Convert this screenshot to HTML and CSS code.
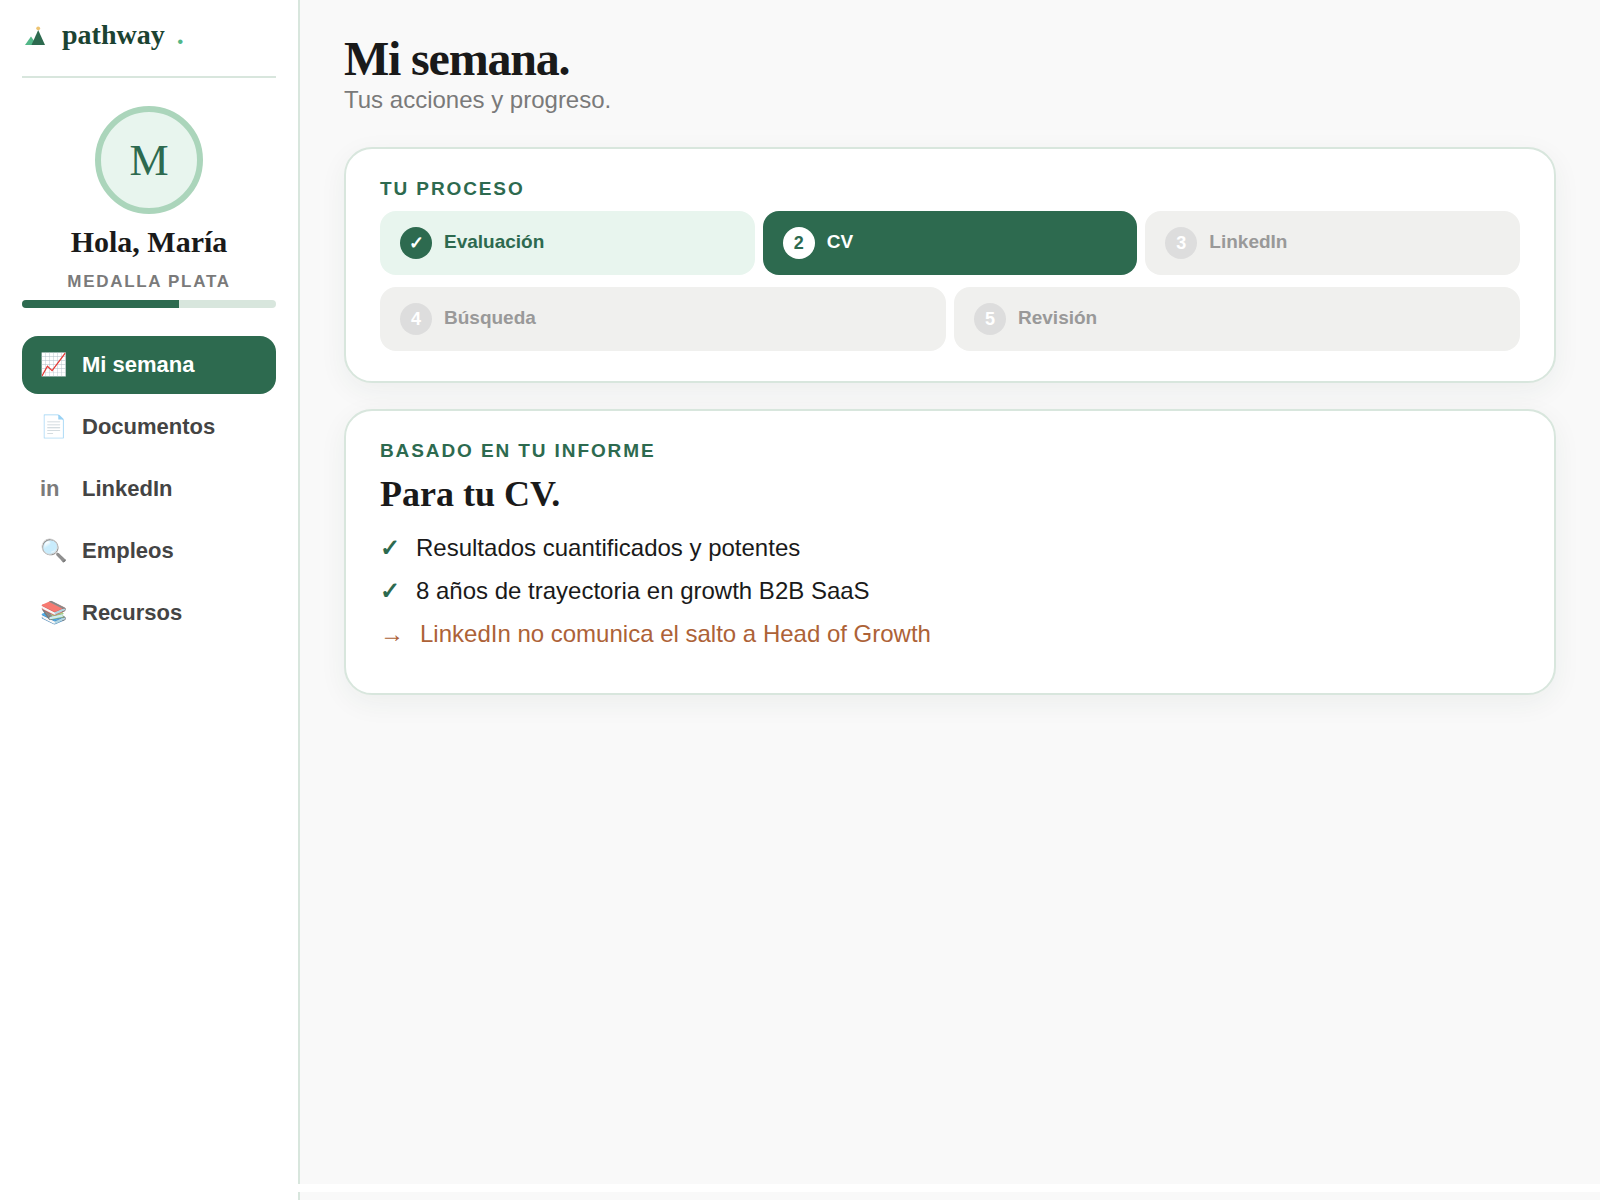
FILE: index.html
```html
<!DOCTYPE html>
<html lang="es">
<head>
    <meta charset="UTF-8">
    <meta name="viewport" content="width=device-width, initial-scale=1.0">
    <title>Pathway - Mi semana</title>
    <link rel="stylesheet" href="styles.css">
</head>
<body>

    <div class="layout">
        <!-- Sidebar -->
        <aside class="sidebar">
            <div class="brand">
                <svg class="brand-logo" viewBox="0 0 28 28" aria-hidden="true">
                    <path d="M3 24L9 15.5L15 24Z" fill="#52b788"/>
                    <path d="M9.500 24L16.200 9L23 24Z" fill="#2d6a4f"/>
                    <circle cx="16.200" cy="7.300" r="1.900" fill="#e9b44c" fill-opacity=".8"/>
                </svg>
                <span class="brand-name">pathway</span>
                <span class="brand-dot">.</span>
            </div>

            <div class="profile">
                <div class="avatar">M</div>
                <div class="profile-name">Hola, María</div>
                <div class="profile-level">MEDALLA PLATA</div>
                <div class="progress">
                    <div class="progress-fill" style="width: 62%"></div>
                </div>
            </div>

            <nav class="menu">
                <a href="#semana" class="menu-item active"><span class="menu-icon">📈</span>Mi semana</a>
                <a href="#documentos" class="menu-item"><span class="menu-icon">📄</span>Documentos</a>
                <a href="#linkedin" class="menu-item"><span class="menu-icon">in</span>LinkedIn</a>
                <a href="#empleos" class="menu-item"><span class="menu-icon">🔍</span>Empleos</a>
                <a href="#recursos" class="menu-item"><span class="menu-icon">📚</span>Recursos</a>
            </nav>
        </aside>

        <!-- Main content -->
        <main class="content">
            <h1>Mi semana.</h1>
            <p class="subtitle">Tus acciones y progreso.</p>

            <section class="card">
                <div class="card-label">TU PROCESO</div>
                <div class="steps">
                    <div class="step done"><span class="step-number">✓</span><span class="step-name">Evaluación</span></div>
                    <div class="step current"><span class="step-number">2</span><span class="step-name">CV</span></div>
                    <div class="step"><span class="step-number">3</span><span class="step-name">LinkedIn</span></div>
                    <div class="step"><span class="step-number">4</span><span class="step-name">Búsqueda</span></div>
                    <div class="step"><span class="step-number">5</span><span class="step-name">Revisión</span></div>
                </div>
            </section>

            <section class="card">
                <div class="card-label">BASADO EN TU INFORME</div>
                <h2>Para tu CV.</h2>
                <ul class="findings">
                    <li><span class="check">✓</span>Resultados cuantificados y potentes</li>
                    <li><span class="check">✓</span>8 años de trayectoria en growth B2B SaaS</li>
                    <li class="warning"><span>→</span>LinkedIn no comunica el salto a Head of Growth</li>
                </ul>
            </section>
        </main>
    </div>

    <!-- Bottom strip -->
    <div class="layout-end">
        <div class="sidebar-end"></div>
        <div class="content-end"></div>
    </div>

</body>
</html>
```
FILE: styles.css
```css
* {
    box-sizing: border-box;
}

body {
    margin: 0;
    min-height: 100vh;
    display: flex;
    flex-direction: column;
    gap: 8px;
    font-family: "Liberation Sans", Arial, sans-serif;
    color: #1a1a1a;
    background-color: #fff;
}

.layout {
    flex: 1;
    display: flex;
}

.sidebar {
    width: 300px;
    flex-shrink: 0;
    padding: 16px 22px;
    border-right: 2px solid #d8e6dd;
}

.brand {
    display: flex;
    align-items: center;
    gap: 12px;
    height: 62px;
    padding-bottom: 22px;
    border-bottom: 2px solid #d8e6dd;
    font-family: "Liberation Serif", "Times New Roman", serif;
    font-size: 28px;
    font-weight: bold;
    color: #1b4332;
}

.brand-logo {
    width: 28px;
    height: 28px;
}

.brand-dot {
    color: #52b788;
}

.profile {
    padding-top: 28px;
    text-align: center;
}

.avatar {
    display: flex;
    align-items: center;
    justify-content: center;
    width: 108px;
    height: 108px;
    margin: 0 auto 10px;
    border: 6px solid #abd5bb;
    border-radius: 50%;
    background-color: #e8f5ee;
    color: #2d6a4f;
    font-family: "Liberation Serif", "Times New Roman", serif;
    font-size: 44px;
}

.profile-name {
    font-family: "Liberation Serif", "Times New Roman", serif;
    font-size: 30px;
    font-weight: bold;
    line-height: 36px;
}

.profile-level {
    margin: 12px 0 8px;
    font-size: 17px;
    font-weight: bold;
    line-height: 20px;
    letter-spacing: 0.1em;
    color: #7a7a7a;
}

.progress {
    height: 8px;
    border-radius: 4px;
    background-color: #d8e6dd;
    overflow: hidden;
}

.progress-fill {
    height: 100%;
    background-color: #2d6a4f;
}

.menu {
    display: flex;
    flex-direction: column;
    gap: 4px;
    margin-top: 28px;
}

.menu-item {
    display: flex;
    align-items: center;
    gap: 14px;
    height: 58px;
    padding: 0 18px;
    border-radius: 16px;
    color: #444;
    font-size: 22px;
    font-weight: bold;
    text-decoration: none;
}

.menu-icon {
    width: 28px;
    opacity: 0.7;
}

.menu-item.active {
    background-color: #2d6a4f;
    color: #fff;
}

.active .menu-icon {
    opacity: 1;
}

.content {
    flex: 1;
    padding: 32px 44px;
    background-color: #f9f9f9;
}

h1 {
    margin: 0;
    font-family: "Liberation Serif", "Times New Roman", serif;
    font-size: 48px;
    line-height: 54px;
    letter-spacing: -0.025em;
}

.subtitle {
    margin: 0 0 33px;
    font-size: 24px;
    line-height: 28px;
    color: #7a7a7a;
}

.card {
    margin-bottom: 26px;
    padding: 30px 34px;
    border: 2px solid #d8e6dd;
    border-radius: 28px;
    background-color: #fff;
    box-shadow: 0 8px 28px rgba(27, 67, 50, 0.06);
}

.card-label {
    margin-bottom: 12px;
    font-size: 19px;
    font-weight: bold;
    line-height: 20px;
    letter-spacing: 0.1em;
    color: #2d6a4f;
}

.steps {
    display: flex;
    flex-wrap: wrap;
    gap: 12px 8px;
}

.step {
    flex: 1 1 320px;
    display: flex;
    align-items: center;
    gap: 12px;
    height: 64px;
    padding: 0 20px;
    border-radius: 16px;
    background-color: #f0f0ee;
    color: #999;
    font-size: 19px;
    font-weight: bold;
}

.step-number {
    display: flex;
    align-items: center;
    justify-content: center;
    width: 32px;
    height: 32px;
    border-radius: 50%;
    background-color: #ddd;
    color: #fff;
    font-size: 18px;
}

.step-name {
    padding-bottom: 2px;
}

.step.done {
    background-color: #e8f5ee;
    color: #2d6a4f;
}

.done .step-number {
    background-color: #2d6a4f;
}

.step.current {
    background-color: #2d6a4f;
    color: #fff;
}

.current .step-number {
    background-color: #fff;
    color: #2d6a4f;
}

h2 {
    margin: 0 0 11px;
    font-family: "Liberation Serif", "Times New Roman", serif;
    font-size: 36px;
    line-height: 42px;
}

.findings {
    margin: 0;
    padding: 0 0 8px;
    list-style: none;
    font-size: 24px;
    line-height: 43px;
}

.findings li {
    display: flex;
    gap: 16px;
}

.findings .check {
    color: #2d6a4f;
    font-weight: bold;
}

.findings .warning {
    color: #ad6237;
}

.layout-end {
    display: flex;
    height: 8px;
}

.sidebar-end {
    width: 300px;
    border-right: 2px solid #d8e6dd;
}

.content-end {
    flex: 1;
    background-color: #f9f9f9;
}
```
